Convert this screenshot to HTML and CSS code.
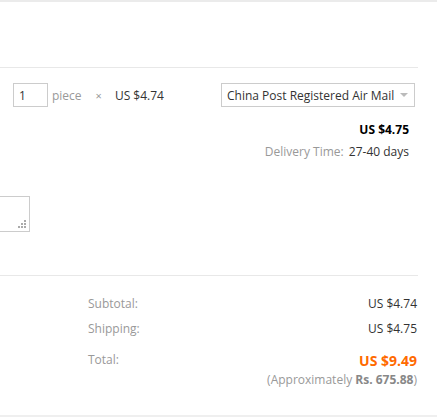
FILE: index.html
```html
<!DOCTYPE html>
<html>
<head>
<meta charset="utf-8">
<link rel="stylesheet" href="styles.css">
</head>
<body>
<div class="topbar"></div>
<div class="page">
  <div class="product-head"></div>
  <div class="item-row">
    <div class="qty-group">
      <input class="qty" type="text" value="1">
      <span class="unit">piece</span>
      <span class="times">×</span>
      <span class="unit-price">US $4.74</span>
    </div>
    <div class="select">
      <span class="select-text">China Post Registered Air Mail</span>
      <span class="select-arrow"></span>
    </div>
  </div>
  <div class="ship-info">
    <div class="ship-price">US $4.75</div>
    <div class="delivery"><span class="delivery-label">Delivery Time:</span> <span class="delivery-value">27-40 days</span></div>
  </div>
  <div class="memo">
    <div class="memo-box"></div>
    <svg class="grip" width="9" height="9" viewBox="0 0 9 9">
      <rect x="6" y="0" width="2" height="2" fill="#aaa"/>
      <rect x="3" y="3" width="2" height="2" fill="#aaa"/>
      <rect x="6" y="3" width="2" height="2" fill="#aaa"/>
      <rect x="0" y="6" width="2" height="2" fill="#aaa"/>
      <rect x="3" y="6" width="2" height="2" fill="#aaa"/>
      <rect x="6" y="6" width="2" height="2" fill="#aaa"/>
    </svg>
  </div>
  <div class="summary">
    <div class="sum-row">
      <span class="sum-label">Subtotal:</span>
      <span class="sum-value">US $4.74</span>
    </div>
    <div class="sum-row">
      <span class="sum-label">Shipping:</span>
      <span class="sum-value">US $4.75</span>
    </div>
    <div class="sum-row total-row">
      <span class="sum-label">Total:</span>
      <div class="total-values">
        <div class="total-value">US $9.49</div>
        <div class="approx">(Approximately <b>Rs. 675.88</b>)</div>
      </div>
    </div>
  </div>
</div>
</body>
</html>
```
FILE: styles.css
```css
* { box-sizing: border-box; }
html, body { margin: 0; padding: 0; background: #fff; }
body {
  font-family: "Open Sans", "Liberation Sans", Arial, sans-serif;
  font-size: 12px;
  color: #333;
  width: 437px;
  height: 417px;
  overflow: hidden;
  border-bottom: 2px solid #efefef;
}
.topbar { height: 2px; background: #ebebeb; }
.page { width: 418px; }
.product-head { height: 66px; border-bottom: 1px solid #e8e8e8; }
.item-row {
  display: flex;
  justify-content: space-between;
  align-items: center;
  padding: 15px 3px 0 13px;
}
.qty-group { display: flex; align-items: center; }
.qty {
  width: 35px;
  height: 24px;
  border: 1px solid #ccc;
  padding: 0 5px;
  font: inherit;
  font-size: 12px;
  color: #333;
  outline: none;
}
.unit { color: #999; margin-left: 4px; }
.times { color: #999; margin-left: 14px; font-size: 11px; }
.unit-price { margin-left: 13px; }
.select {
  width: 194px;
  height: 24px;
  border: 1px solid #ccc;
  display: flex;
  align-items: center;
  justify-content: space-between;
  padding: 0 6px 0 5px;
  font-size: 12px;
  color: #333;
  white-space: nowrap;
}
.select-arrow {
  width: 0; height: 0;
  border-left: 4px solid transparent;
  border-right: 4px solid transparent;
  border-top: 4px solid #bbb;
}
.ship-info { text-align: right; padding: 14px 9px 0 0; }
.ship-price { font-weight: 700; font-size: 12px; line-height: 18px; color: #000; }
.delivery { font-size: 12px; line-height: 20px; margin-top: 3px; }
.delivery-label { color: #999; margin-right: 2px; }
.memo { position: relative; width: 30px; margin-top: 34px; height: 36px; }
.memo-box {
  position: absolute;
  right: 0; top: 0;
  width: 130px; height: 36px;
  border: 1px solid #ccc;
}
.grip { position: absolute; right: 3px; bottom: 3px; }
.summary {
  margin-top: 43px;
  border-top: 1px solid #e8e8e8;
  padding: 19px 1px 0 88px;
}
.sum-row { display: flex; justify-content: space-between; font-size: 12px; line-height: 18px; margin-bottom: 7px; }
.sum-label { color: #999; }
.total-row { margin-top: 13px; }
.total-values { text-align: right; }
.total-value { color: #ff6a00; font-weight: 700; font-size: 14px; line-height: 20px; }
.approx { color: #999; font-size: 12px; line-height: 17px; }
.approx b { color: #888; }
```
